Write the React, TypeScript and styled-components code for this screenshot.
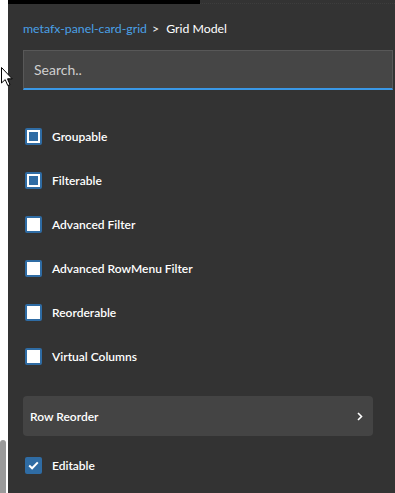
import React from "react";
import styled, { createGlobalStyle } from "styled-components";

const Global = createGlobalStyle`
  html, body, #root { margin: 0; padding: 0; height: 100%; }
  body { overflow: hidden; background: #ffffff; font-family: "Lato", "Noto Sans", sans-serif; }
`;

const Page = styled.div`
  display: flex;
  height: 493px;
  width: 395px;
`;

const Gutter = styled.div`
  position: relative;
  width: 8px;
  flex: none;
  background: #ffffff;
`;

const ScrollThumb = styled.div`
  position: absolute;
  left: 0;
  top: 440px;
  width: 6px;
  bottom: 0;
  background: #9a9a9a;
  border-radius: 3px 3px 0 0;
`;

const Cursor = styled.svg`
  position: absolute;
  left: 1px;
  top: 67px;
  z-index: 5;
`;

const Panel = styled.div`
  flex: 1;
  background: #333333;
  display: flex;
  flex-direction: column;
`;

const TopBar = styled.div`
  display: flex;
  height: 5px;
`;

const TopBlack = styled.div`
  width: 192px;
  height: 4px;
  background: #000000;
`;

const TopRest = styled.div`
  flex: 1;
  height: 4px;
  border-bottom: 1px dotted #3d3d3d;
  box-sizing: border-box;
`;

const Content = styled.div`
  padding: 16px 2px 0 15px;
  display: flex;
  flex-direction: column;
`;

const Crumbs = styled.div`
  font-size: 12.3px;
  color: #f0f0f0;
  display: flex;
  gap: 5px;
  height: 16px;
  line-height: 16px;
`;

const CrumbLink = styled.span`
  color: #4aa0e6;
`;

const CrumbCurrent = styled.span`
  color: #ffffff;
  margin-left: 2px;
`;

const SearchBox = styled.input`
  margin-top: 13px;
  height: 40px;
  box-sizing: border-box;
  width: 370px;
  background: #464646;
  border: 1px solid #585858;
  border-bottom: 2px solid #3a98e6;
  color: #eeeeee;
  font-family: inherit;
  font-size: 14px;
  padding: 0 10px;
  outline: none;
  &::placeholder { color: #cfcfcf; }
`;

const List = styled.div`
  margin-top: 24px;
  display: flex;
  flex-direction: column;
`;

const Row = styled.label`
  display: flex;
  align-items: center;
  height: 44px;
  gap: 10px;
  padding-left: 2px;
  color: #ffffff;
  font-size: 12px;
  font-weight: 600;
`;

const Box = styled.span<{ $state: "off" | "mixed" | "on" }>`
  width: 17px;
  height: 17px;
  box-sizing: border-box;
  border-radius: 2px;
  flex: none;
  display: flex;
  align-items: center;
  justify-content: center;
  background: ${(p) => (p.$state === "off" ? "#ffffff" : "#2f6ca4")};
  border: ${(p) => (p.$state === "on" ? "0" : "2px solid #2f6ca4")};
  box-shadow: ${(p) => (p.$state === "mixed" ? "inset 0 0 0 2px #ffffff" : "none")};
`;

const Section = styled.div`
  margin-top: 18px;
  margin-bottom: 7px;
  width: 350px;
  height: 40px;
  box-sizing: border-box;
  background: #444444;
  border-radius: 4px;
  display: flex;
  align-items: center;
  justify-content: space-between;
  padding: 0 10px 0 7px;
  color: #ffffff;
  font-size: 12px;
  font-weight: 600;
`;

const Chevron = styled.svg`
  display: block;
`;

type Item = { label: string; state: "off" | "mixed" | "on" };

const items: Item[] = [
  { label: "Groupable", state: "mixed" },
  { label: "Filterable", state: "mixed" },
  { label: "Advanced Filter", state: "off" },
  { label: "Advanced RowMenu Filter", state: "off" },
  { label: "Reorderable", state: "off" },
  { label: "Virtual Columns", state: "off" },
];

const Check = ({ item }: { item: Item }) => (
  <Row>
    <Box $state={item.state}>
      {item.state === "on" && (
        <svg width="11" height="9" viewBox="0 0 11 9">
          <path d="M1.2 4.6 L4.1 7.3 L9.8 1.4" fill="none" stroke="#ffffff" strokeWidth="2" />
        </svg>
      )}
    </Box>
    {item.label}
  </Row>
);

export default function App() {
  return (
    <>
      <Global />
      <Page>
        <Gutter>
          <Cursor width="12" height="20" viewBox="0 0 12 20">
            <path d="M0.5 0.5 L0.5 16 L4.2 12.6 L6.8 18.6 L9 17.6 L6.5 11.8 L11.2 11.8 Z" fill="#ffffff" stroke="#000000" strokeWidth="1" />
          </Cursor>
          <ScrollThumb />
        </Gutter>
        <Panel>
          <TopBar>
            <TopBlack />
            <TopRest />
          </TopBar>
          <Content>
            <Crumbs>
              <CrumbLink>metafx-panel-card-grid</CrumbLink>
              <span>&gt;</span>
              <CrumbCurrent>Grid Model</CrumbCurrent>
            </Crumbs>
            <SearchBox placeholder="Search.." />
            <List>
              {items.map((it) => (
                <Check key={it.label} item={it} />
              ))}
            </List>
            <Section>
              <span>Row Reorder</span>
              <Chevron width="6" height="9" viewBox="0 0 6 9">
                <path d="M1 1 L4.5 4.5 L1 8" fill="none" stroke="#ffffff" strokeWidth="1.6" />
              </Chevron>
            </Section>
            <Check item={{ label: "Editable", state: "on" }} />
          </Content>
        </Panel>
      </Page>
    </>
  );
}
